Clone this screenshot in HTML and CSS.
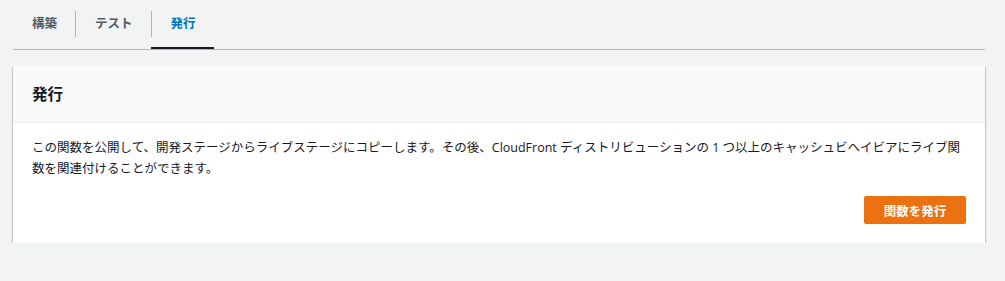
FILE: index.html
```html
<!DOCTYPE html>
<html lang="ja">
<head>
    <meta charset="UTF-8">
    <meta name="viewport" content="width=device-width, initial-scale=1.0">
    <title>発行</title>
    <link rel="stylesheet" href="styles.css">
</head>
<body>
    <div class="page">
        <div class="tabs">
            <div class="tab"><span class="tab-label">構築</span></div>
            <div class="tab"><span class="tab-label">テスト</span></div>
            <div class="tab active"><span class="tab-label">発行</span></div>
        </div>

        <div class="card">
            <div class="card-header">
                <h2 class="card-title">発行</h2>
            </div>
            <div class="card-body">
                <p class="desc">この関数を公開して、開発ステージからライブステージにコピーします。その後、CloudFront ディストリビューションの 1 つ以上のキャッシュビヘイビアにライブ関数を関連付けることができます。</p>
                <div class="actions">
                    <button class="btn-primary">関数を発行</button>
                </div>
            </div>
        </div>
    </div>
</body>
</html>
```

FILE: styles.css
```css
* {
    box-sizing: border-box;
}
body {
    margin: 0;
    background-color: #f2f3f3;
    font-family: "Open Sans", "Noto Sans CJK JP", sans-serif;
    color: #16191f;
}
.page {
    padding: 0 20px 0 13px;
}

/* タブ */
.tabs {
    display: flex;
    border-bottom: 1px solid #aab7b8;
}
.tab {
    padding: 11px 0 10px;
    border-bottom: 2px solid transparent;
}
.tab-label {
    display: block;
    padding: 0 18px 0 19px;
    line-height: 26px;
    font-size: 12.5px;
    font-weight: bold;
    color: #545b64;
    border-left: 1px solid #aab7b8;
}
.tab:first-child .tab-label {
    border-left: none;
}
.tab.active {
    border-bottom-color: #16191f;
}
.tab.active .tab-label {
    color: #0073bb;
}

/* カード */
.card {
    margin-top: 16px;
    background-color: #ffffff;
    box-shadow: 0 1px 1px 0 rgba(0, 28, 36, 0.3), 1px 1px 1px 0 rgba(0, 28, 36, 0.15), -1px 1px 1px 0 rgba(0, 28, 36, 0.15);
}
.card-header {
    background-color: #fafafa;
    border-bottom: 1px solid #eaeded;
    padding: 17px 19px;
}
.card-title {
    margin: 0;
    font-size: 15.5px;
    line-height: 22px;
    font-weight: bold;
}
.card-body {
    padding: 14px 19px 19px;
}
.desc {
    margin: 0 0 17px;
    font-size: 12.5px;
    line-height: 21px;
}
.actions {
    display: flex;
    justify-content: flex-end;
}
.btn-primary {
    width: 102px;
    height: 28px;
    border: none;
    border-radius: 2px;
    background-color: #ec7211;
    color: #ffffff;
    font-family: inherit;
    font-size: 12.5px;
    font-weight: bold;
    cursor: pointer;
}
```
